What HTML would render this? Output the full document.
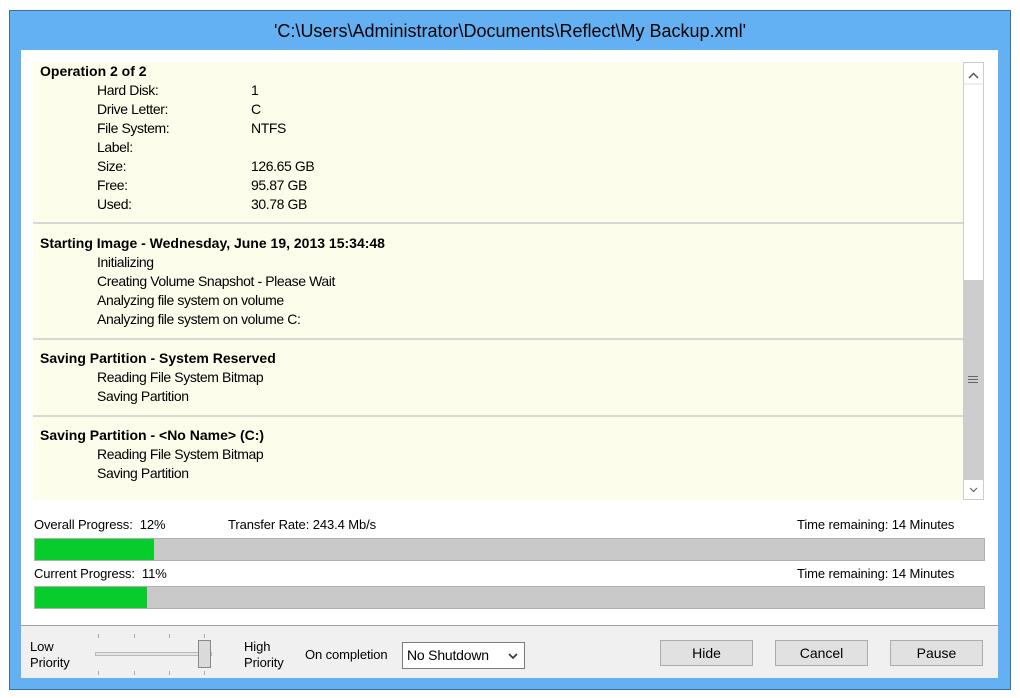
<!DOCTYPE html>
<html><head><style>
*{margin:0;padding:0;box-sizing:border-box}
body{width:1020px;height:698px;background:#fff;position:relative;overflow:hidden;font-family:"Liberation Sans",sans-serif;color:#000}
.a{position:absolute}
.t{position:absolute;font-size:14px;letter-spacing:-0.4px;white-space:nowrap;line-height:19px}
.h{font-weight:bold;letter-spacing:0;font-size:14px}
.s{font-size:13px;letter-spacing:-0.1px;white-space:nowrap;position:absolute;line-height:16px}
.div{position:absolute;left:33px;width:930px;height:2px;background:#d8d8d0}
.btn{position:absolute;top:640px;width:93px;height:26px;border:1px solid #acacac;background:#e1e1e1;font-size:14px;text-align:center;line-height:24px}
.tick{position:absolute;width:1px;height:4px;background:#aaa}
</style></head><body>
<div class="a" style="left:9px;top:10px;width:1002px;height:680px;background:#63b1f3;border:1px solid #3a6ea5"></div>
<div class="a" style="left:0;top:18px;width:1020px;text-align:center;font-size:18px;line-height:26px;color:#000">'C:\Users\Administrator\Documents\Reflect\My Backup.xml'</div>
<div class="a" style="left:21px;top:50px;width:977px;height:628px;background:#fff"></div>
<div class="a" style="left:33px;top:62px;width:930px;height:438px;background:#fdfdec"></div>
<!-- scrollbar -->
<div class="a" style="left:963px;top:62px;width:21px;height:438px;background:#fff;border:1px solid #ccc"></div>
<div class="a" style="left:964px;top:280px;width:19px;height:200px;background:#cdcdcd"></div>
<svg class="a" style="left:963px;top:62px" width="21" height="438"><path d="M6 16 L10.5 11.5 L15 16" fill="none" stroke="#555" stroke-width="1.5"/><path d="M7 426 L10.5 429.5 L14 426" fill="none" stroke="#666" stroke-width="1.2"/><line x1="0" y1="22" x2="21" y2="22" stroke="#ddd"/></svg>
<div class="a" style="left:968px;top:376px;width:10px;height:1px;background:#666;box-shadow:0 3px #666,0 6px #666"></div>

<div class="t h" style="left:40px;top:62px">Operation 2 of 2</div>
<div class="t" style="left:97px;top:81px">Hard Disk:<br>Drive Letter:<br>File System:<br>Label:<br>Size:<br>Free:<br>Used:</div>
<div class="t" style="left:251px;top:81px">1<br>C<br>NTFS<br><br>126.65 GB<br>95.87 GB<br>30.78 GB</div>
<div class="div" style="top:222px"></div>
<div class="t h" style="left:40px;top:234px">Starting Image - Wednesday, June 19, 2013 15:34:48</div>
<div class="t" style="left:97px;top:253px">Initializing<br>Creating Volume Snapshot - Please Wait<br>Analyzing file system on volume<br>Analyzing file system on volume C:</div>
<div class="div" style="top:338px"></div>
<div class="t h" style="left:40px;top:349px">Saving Partition - System Reserved</div>
<div class="t" style="left:97px;top:368px">Reading File System Bitmap<br>Saving Partition</div>
<div class="div" style="top:415px"></div>
<div class="t h" style="left:40px;top:426px">Saving Partition - &lt;No Name&gt; (C:)</div>
<div class="t" style="left:97px;top:445px">Reading File System Bitmap<br>Saving Partition</div>

<div class="s" style="left:34px;top:517px">Overall Progress:&nbsp; 12%</div>
<div class="s" style="left:228px;top:517px">Transfer Rate: 243.4 Mb/s</div>
<div class="s" style="left:797px;top:517px">Time remaining: 14 Minutes</div>
<div class="a" style="left:34px;top:538px;width:951px;height:23px;background:#c9c9c9;border:1px solid #b0b0b0"></div>
<div class="a" style="left:35px;top:539px;width:119px;height:21px;background:#06cc2c"></div>
<div class="s" style="left:34px;top:566px">Current Progress:&nbsp; 11%</div>
<div class="s" style="left:797px;top:566px">Time remaining: 14 Minutes</div>
<div class="a" style="left:34px;top:586px;width:951px;height:23px;background:#c9c9c9;border:1px solid #b0b0b0"></div>
<div class="a" style="left:35px;top:587px;width:112px;height:21px;background:#06cc2c"></div>

<div class="a" style="left:21px;top:625px;width:977px;height:53px;background:#f0f0f0;border-top:1px solid #a0a0a0"></div>
<div class="s" style="left:30px;top:639px">Low<br>Priority</div>
<div class="a" style="left:95px;top:652px;width:117px;height:4px;border:1px solid #b8b8b8;background:#e6e6e6"></div>
<div class="tick" style="left:98px;top:634px"></div><div class="tick" style="left:134px;top:634px"></div><div class="tick" style="left:169px;top:634px"></div><div class="tick" style="left:204px;top:634px"></div>
<div class="tick" style="left:98px;top:671px"></div><div class="tick" style="left:134px;top:671px"></div><div class="tick" style="left:169px;top:671px"></div><div class="tick" style="left:204px;top:671px"></div>
<div class="a" style="left:198px;top:640px;width:13px;height:28px;background:#dadada;border:1px solid #888"></div>
<div class="s" style="left:244px;top:639px">High<br>Priority</div>
<div class="s" style="left:305px;top:647px">On completion</div>
<div class="a" style="left:402px;top:642px;width:123px;height:27px;border:1px solid #7a7a7a;background:#fff;font-size:14px;line-height:25px;padding-left:4px;letter-spacing:-0.2px">No Shutdown<svg style="position:absolute;right:6px;top:9px" width="10" height="8"><path d="M1 2 L5 6 L9 2" fill="none" stroke="#333" stroke-width="1.6"/></svg></div>
<div class="btn" style="left:660px">Hide</div>
<div class="btn" style="left:775px">Cancel</div>
<div class="btn" style="left:890px">Pause</div>
</body></html>
